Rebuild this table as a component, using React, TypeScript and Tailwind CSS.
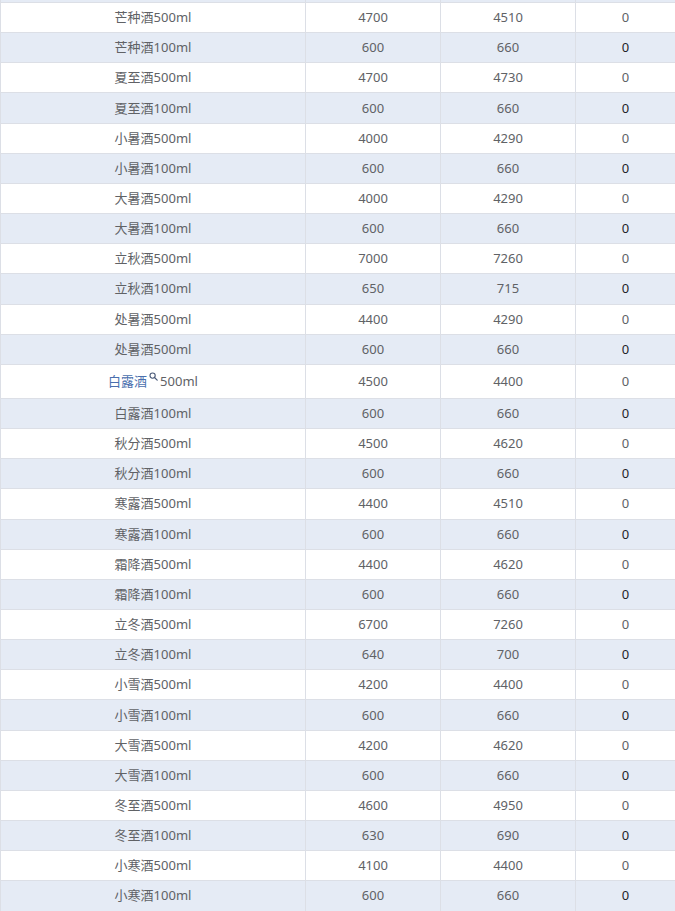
import React from "react";

type Row = [string, string, string, string];

const rows: Row[] = [
  ["芒种酒500ml", "4700", "4510", "0"],
  ["芒种酒100ml", "600", "660", "0"],
  ["夏至酒500ml", "4700", "4730", "0"],
  ["夏至酒100ml", "600", "660", "0"],
  ["小暑酒500ml", "4000", "4290", "0"],
  ["小暑酒100ml", "600", "660", "0"],
  ["大暑酒500ml", "4000", "4290", "0"],
  ["大暑酒100ml", "600", "660", "0"],
  ["立秋酒500ml", "7000", "7260", "0"],
  ["立秋酒100ml", "650", "715", "0"],
  ["处暑酒500ml", "4400", "4290", "0"],
  ["处暑酒500ml", "600", "660", "0"],
  ["白露酒500ml", "4500", "4400", "0"],
  ["白露酒100ml", "600", "660", "0"],
  ["秋分酒500ml", "4500", "4620", "0"],
  ["秋分酒100ml", "600", "660", "0"],
  ["寒露酒500ml", "4400", "4510", "0"],
  ["寒露酒100ml", "600", "660", "0"],
  ["霜降酒500ml", "4400", "4620", "0"],
  ["霜降酒100ml", "600", "660", "0"],
  ["立冬酒500ml", "6700", "7260", "0"],
  ["立冬酒100ml", "640", "700", "0"],
  ["小雪酒500ml", "4200", "4400", "0"],
  ["小雪酒100ml", "600", "660", "0"],
  ["大雪酒500ml", "4200", "4620", "0"],
  ["大雪酒100ml", "600", "660", "0"],
  ["冬至酒500ml", "4600", "4950", "0"],
  ["冬至酒100ml", "630", "690", "0"],
  ["小寒酒500ml", "4100", "4400", "0"],
  ["小寒酒100ml", "600", "660", "0"],
];

function SearchIcon() {
  return (
    <svg width="9" height="9" viewBox="0 0 9 9" className="inline-block align-top -mt-[1px] mx-[2px]">
      <circle cx="3.6" cy="3.6" r="2.6" fill="none" stroke="#4a5a78" strokeWidth="1.1" />
      <line x1="5.5" y1="5.5" x2="8.2" y2="8.2" stroke="#4a5a78" strokeWidth="1.2" strokeLinecap="round" />
    </svg>
  );
}

export default function App() {
  return (
    <div
      className="w-[675px] h-[911px] overflow-hidden bg-white text-[13px] text-[#606266]"
      style={{ fontFamily: '"Noto Sans", "Noto Sans CJK SC", sans-serif' }}
    >
      <div className="border-l border-[#dcdfe6]">
        {/* partial previous row */}
        <div className="flex h-[3px] border-b border-[#dcdfe6] bg-[#e5ebf5]">
          <div className="w-[305px] border-r border-[#dcdfe6]" />
          <div className="w-[135px] border-r border-[#dcdfe6]" />
          <div className="w-[135px] border-r border-[#dcdfe6]" />
          <div className="flex-1" />
        </div>
        {rows.map((r, i) => {
          const striped = i % 2 === 1;
          const special = r[0] === "白露酒500ml" && i === 12;
          return (
            <div
              key={i}
              className={`flex border-b border-[#dcdfe6] ${special ? "h-[34px]" : "h-[30.17px]"} ${
                striped ? "bg-[#e5ebf5]" : "bg-white"
              }`}
            >
              <div className="w-[305px] border-r border-[#dcdfe6] flex items-center justify-center leading-none">
                {special ? (
                  <span className="flex items-center">
                    <span className="text-[#4a6fae]">白露酒</span>
                    <span className="self-start -mt-[2px]">
                      <SearchIcon />
                    </span>
                    <span>500ml</span>
                  </span>
                ) : (
                  <span>{r[0]}</span>
                )}
              </div>
              <div className="w-[135px] border-r border-[#dcdfe6] flex items-center justify-center leading-none">
                {r[1]}
              </div>
              <div className="w-[135px] border-r border-[#dcdfe6] flex items-center justify-center leading-none">
                {r[2]}
              </div>
              <div
                className={`flex-1 flex items-center justify-center leading-none ${
                  striped ? "text-[#1f2329]" : ""
                }`}
              >
                {r[3]}
              </div>
            </div>
          );
        })}
      </div>
    </div>
  );
}
